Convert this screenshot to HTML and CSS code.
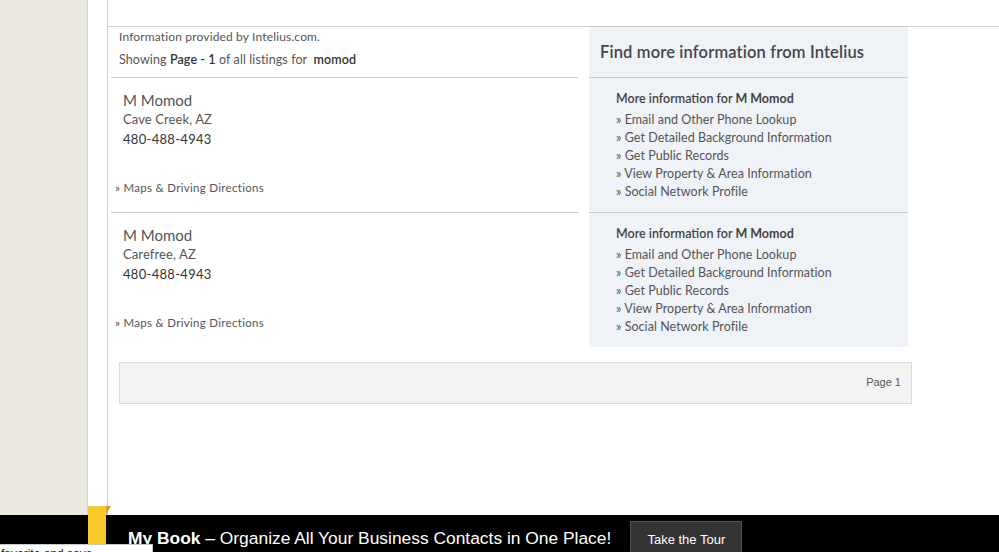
FILE: index.html
```html
<!DOCTYPE html>
<html lang="en">
<head>
    <meta charset="UTF-8">
    <meta name="viewport" content="width=device-width, initial-scale=1.0">
    <title>M Momod - Listings</title>
    <link rel="stylesheet" href="styles.css">
</head>
<body>
    <div class="page">
        <div class="sidebar"></div>
        <div class="gutter"></div>
        <div class="main">
            <div class="topbar"></div>

            <div class="results">
                <div class="cell intro">
                    <p class="source">Information provided by Intelius.com.</p>
                    <p class="showing">Showing <b>Page - 1</b> of all listings for &nbsp;<b>momod</b></p>
                </div>
                <div class="cell panel panel-head">
                    <h2>Find more information from Intelius</h2>
                </div>

                <div class="cell listing">
                    <div class="name">M Momod</div>
                    <div class="city">Cave Creek, AZ</div>
                    <div class="phone">480-488-4943</div>
                    <a class="maps" href="#">&raquo; Maps &amp; Driving Directions</a>
                </div>
                <div class="cell panel more">
                    <h3>More information for <b>M Momod</b></h3>
                    <ul>
                        <li><a href="#">&raquo; Email and Other Phone Lookup</a></li>
                        <li><a href="#">&raquo; Get Detailed Background Information</a></li>
                        <li><a href="#">&raquo; Get Public Records</a></li>
                        <li><a href="#">&raquo; View Property &amp; Area Information</a></li>
                        <li><a href="#">&raquo; Social Network Profile</a></li>
                    </ul>
                </div>

                <div class="cell listing last">
                    <div class="name">M Momod</div>
                    <div class="city">Carefree, AZ</div>
                    <div class="phone">480-488-4943</div>
                    <a class="maps" href="#">&raquo; Maps &amp; Driving Directions</a>
                </div>
                <div class="cell panel more last">
                    <h3>More information for <b>M Momod</b></h3>
                    <ul>
                        <li><a href="#">&raquo; Email and Other Phone Lookup</a></li>
                        <li><a href="#">&raquo; Get Detailed Background Information</a></li>
                        <li><a href="#">&raquo; Get Public Records</a></li>
                        <li><a href="#">&raquo; View Property &amp; Area Information</a></li>
                        <li><a href="#">&raquo; Social Network Profile</a></li>
                    </ul>
                </div>
            </div>

            <div class="pager">Page 1</div>
        </div>
    </div>

    <div class="tab-flag"></div>

    <div class="promo-bar">
        <span class="promo-text"><b>My Book</b> &ndash; Organize All Your Business Contacts in One Place!</span>
        <button class="tour-btn">Take the Tour</button>
    </div>

    <div class="status-bubble">favorite and save</div>
</body>
</html>
```

FILE: styles.css
```css
* {
    margin: 0;
    padding: 0;
    box-sizing: border-box;
}

body {
    background: white;
    font-family: Lato, "Open Sans", Arial, sans-serif;
    color: #555;
    overflow: hidden;
    height: 552px;
}

a {
    color: inherit;
    text-decoration: none;
}

ul {
    list-style: none;
}

.page {
    display: flex;
    height: 552px;
}

.sidebar {
    width: 88px;
    background: #ebe9df;
    border-right: 1px solid #d4d2ca;
}

.gutter {
    width: 20px;
    background: white;
    border-right: 1px solid #cfcfcf;
}

.main {
    flex: 1;
}

.topbar {
    height: 27px;
    border-bottom: 1px solid #cfcfcf;
}

/* results grid */
.results {
    display: grid;
    grid-template-columns: 467px 319px;
    column-gap: 11px;
    margin-left: 3px;
}

.cell {
    border-bottom: 1px solid #c9c9c9;
}

.cell.last {
    border-bottom: none;
}

.panel {
    background: #eff2f7;
}

.intro {
    padding: 2px 8px 7px;
    height: 51px;
}

.source {
    font-size: 12px;
    line-height: 16px;
    letter-spacing: 0.15px;
    color: #555;
}

.showing {
    font-size: 12.5px;
    line-height: 20px;
    margin-top: 5px;
    letter-spacing: 0.1px;
    color: #555;
}

.showing b {
    font-weight: 600;
    color: #333;
}

.panel-head {
    display: flex;
    align-items: center;
    padding-left: 11px;
    height: 51px;
}

.panel-head h2 {
    font-size: 16.5px;
    font-weight: 600;
    letter-spacing: 0.15px;
    color: #454545;
}

.listing {
    padding: 12px 8px 16px 4px;
    height: 135px;
}

.listing .name,
.listing .city,
.listing .phone {
    padding-left: 8px;
}

.name {
    font-size: 15px;
    line-height: 20px;
    color: #555;
}

.city {
    font-size: 13px;
    line-height: 19px;
    letter-spacing: 0.1px;
    color: #555;
}

.phone {
    font-size: 13px;
    line-height: 20px;
    color: #333;
    letter-spacing: 0.3px;
}

.maps {
    display: block;
    margin-top: 31px;
    font-size: 11.5px;
    line-height: 16px;
    letter-spacing: 0.3px;
    color: #555;
}

.more {
    padding: 12px 10px 11px 27px;
    height: 135px;
}

.more.last {
    height: 134px;
}

.more h3 {
    font-size: 12.5px;
    line-height: 18px;
    font-weight: 600;
    color: #444;
    margin-bottom: 3px;
}

.more h3 b {
    font-weight: 700;
}

.more li {
    font-size: 12.5px;
    line-height: 18px;
    letter-spacing: 0.05px;
    color: #555;
}

/* pager */
.pager {
    margin: 14px 0 0 11px;
    width: 793px;
    height: 42px;
    background: #f3f3f3;
    border: 1px solid #dadada;
    text-align: right;
    padding: 13px 10px 0 0;
    font-family: "Liberation Sans", Arial, sans-serif;
    font-size: 11px;
    color: #555;
}

/* sticky promo bar */
.promo-bar {
    position: fixed;
    left: 0;
    right: 0;
    bottom: 0;
    height: 37px;
    background: #000;
    display: flex;
    align-items: flex-end;
    padding-left: 128px;
    gap: 19px;
}

.promo-text {
    font-family: "Liberation Sans", Arial, sans-serif;
    font-size: 17.4px;
    color: #fff;
    line-height: 20px;
    margin-bottom: 4px;
}

.promo-text b {
    font-weight: 700;
}

.tour-btn {
    font-family: "Liberation Sans", Arial, sans-serif;
    font-size: 13px;
    color: #fff;
    background: #333;
    border: 1px solid #555;
    border-bottom: none;
    width: 112px;
    height: 31px;
    padding-top: 4px;
}

.tab-flag {
    position: fixed;
    left: 88px;
    bottom: 0;
    width: 18px;
    height: 46px;
    background: #f7c92b;
    z-index: 2;
}

.tab-flag::after {
    content: "";
    position: absolute;
    top: 0;
    right: -5px;
    border-left: 5px solid #c9a23a;
    border-bottom: 9px solid transparent;
}

.status-bubble {
    position: fixed;
    left: -1px;
    top: 544px;
    width: 154px;
    height: 14px;
    background: #fff;
    border: 1px solid #c9c9c9;
    font-family: "Liberation Sans", Arial, sans-serif;
    font-size: 12px;
    line-height: 14px;
    padding: 2px 0 0 1px;
    color: #222;
    overflow: hidden;
    z-index: 3;
}
```
